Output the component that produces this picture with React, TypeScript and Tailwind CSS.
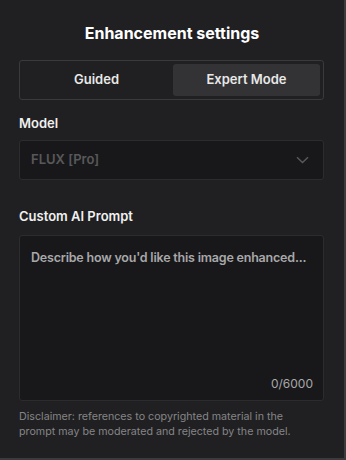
import React from "react";

export default function App() {
  return (
    <div
      className="w-[346px] h-[460px] bg-[#202022] border-r-2 border-b-2 border-[#3b3b3d] flex flex-col px-[19px] text-white"
      style={{ fontFamily: "Inter, 'Noto Sans', sans-serif" }}
    >
      <h1 className="text-center text-[16px] font-bold mt-[23px] leading-[20px]">Enhancement settings</h1>
      <div className="mt-[17px] h-[40px] w-[305px] border border-[#3a3a3c] rounded-[3px] flex p-[3px] gap-[3px]">
        <button className="flex-1 text-[13px] font-semibold text-[#e8e8e8] rounded-[3px]">Guided</button>
        <button className="flex-1 text-[13px] font-semibold text-[#e8e8e8] bg-[#333335] rounded-[3px]">Expert Mode</button>
      </div>
      <div className="mt-[14px] text-[13px] font-semibold leading-[18px] text-[#f0f0f0]">Model</div>
      <div className="mt-[8px] h-[40px] w-[305px] bg-[#18181a] border border-[#2c2c2e] rounded-[3px] flex items-center justify-between pl-[11px] pr-[14px]">
        <span className="text-[13px] font-semibold text-[#58585a]">FLUX [Pro]</span>
        <svg width="13" height="8" viewBox="0 0 13 8" fill="none">
          <path d="M1 1.2l5.5 5.3 5.5-5.3" stroke="#5a5a5c" strokeWidth="1.4" />
        </svg>
      </div>
      <div className="mt-[27px] text-[13px] font-semibold leading-[18px] text-[#f0f0f0]">Custom AI Prompt</div>
      <div className="mt-[10px] h-[166px] w-[305px] bg-[#18181a] border border-[#2c2c2e] rounded-[3px] flex flex-col justify-between pl-[11px] pr-[10px] pt-[13px] pb-[8px]">
        <span className="text-[12.5px] font-semibold text-[#a8a8aa] leading-[18px] whitespace-nowrap tracking-[-0.2px]">Describe how you'd like this image enhanced...</span>
        <span className="self-end text-[12px] text-[#a8a8aa] leading-[16px]">0/6000</span>
      </div>
      <p className="mt-[8px] text-[10.7px] leading-[15px] text-[#858587] pr-[14px]">
        Disclaimer: references to copyrighted material in the prompt may be moderated and rejected by the model.
      </p>
    </div>
  );
}
